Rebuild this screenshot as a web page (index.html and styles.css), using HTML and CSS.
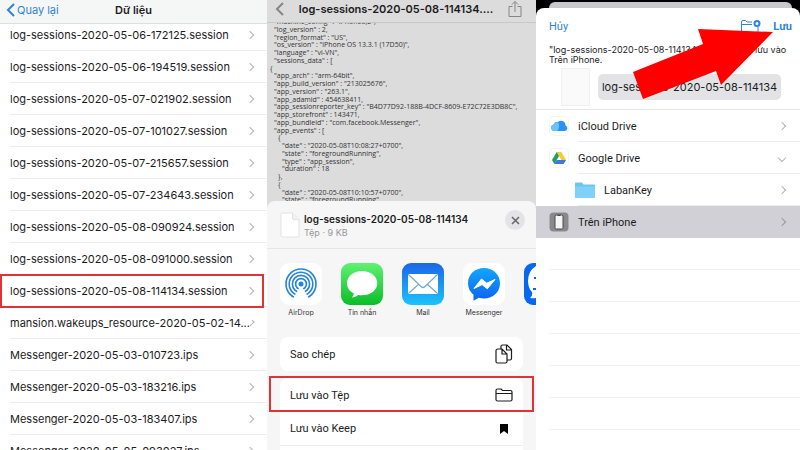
FILE: index.html
```html
<!DOCTYPE html>
<html lang="vi">
  <head>
    <meta charset="UTF-8" />
    <meta name="viewport" content="width=device-width, initial-scale=1.0" />
    <title>Dữ liệu</title>
    <link rel="stylesheet" href="styles.css" />
  </head>
  <body>
    <main class="screens">
      <!-- Dữ liệu -->
      <section class="screen">
        <header class="nav-bar">
          <button class="back" type="button">
            <svg width="9" height="14" viewBox="0 0 9 14" fill="none" stroke="currentColor" stroke-width="2"><path d="M8 1 2 7l6 6" /></svg>
            Quay lại
          </button>
          <h1>Dữ liệu</h1>
        </header>
        <ul class="log-list">
          <li><a href="#"><span>log-sessions-2020-05-06-172125.session</span></a></li>
          <li><a href="#"><span>log-sessions-2020-05-06-194519.session</span></a></li>
          <li><a href="#"><span>log-sessions-2020-05-07-021902.session</span></a></li>
          <li><a href="#"><span>log-sessions-2020-05-07-101027.session</span></a></li>
          <li><a href="#"><span>log-sessions-2020-05-07-215657.session</span></a></li>
          <li><a href="#"><span>log-sessions-2020-05-07-234643.session</span></a></li>
          <li><a href="#"><span>log-sessions-2020-05-08-090924.session</span></a></li>
          <li><a href="#"><span>log-sessions-2020-05-08-091000.session</span></a></li>
          <li class="marked"><a href="#"><span>log-sessions-2020-05-08-114134.session</span></a></li>
          <li><a href="#"><span>mansion.wakeups_resource-2020-05-02-14...</span></a></li>
          <li><a href="#"><span>Messenger-2020-05-03-010723.ips</span></a></li>
          <li><a href="#"><span>Messenger-2020-05-03-183216.ips</span></a></li>
          <li><a href="#"><span>Messenger-2020-05-03-183407.ips</span></a></li>
          <li><a href="#"><span>Messenger-2020-05-05-093027.ips</span></a></li>
        </ul>
      </section>

      <!-- Chia sẻ -->
      <section class="screen screen-share">
        <header class="nav-bar nav-dim">
          <button class="back" type="button" aria-label="Quay lại">
            <svg width="9" height="14" viewBox="0 0 9 14" fill="none" stroke="currentColor" stroke-width="2"><path d="M8 1 2 7l6 6" /></svg>
          </button>
          <h2>log-sessions-2020-05-08-114134....</h2>
          <button class="share" type="button" aria-label="Chia sẻ">
            <svg width="14" height="18" viewBox="0 0 14 18" fill="none" stroke="currentColor"><path d="M4.500 6.500H1v10h12v-10H9.500M7 12V1.500M4 4.500l3-3 3 3" /></svg>
          </button>
        </header>
        <div class="code">
          <span>"machine_config" : "iPhone8,2",</span>
          <span>"log_version" : 2,</span>
          <span>"region_format" : "US",</span>
          <span>"os_version" : "iPhone OS 13.3.1 (17D50)",</span>
          <span>"language" : "vi-VN",</span>
          <span>"sessions_data" : [</span>
          <span class="out">{</span>
          <span>"app_arch" : "arm-64bit",</span>
          <span>"app_build_version" : "213025676",</span>
          <span>"app_version" : "263.1",</span>
          <span>"app_adamid" : 454638411,</span>
          <span>"app_sessionreporter_key" : "B4D77D92-188B-4DCF-8609-E72C72E3DB8C",</span>
          <span>"app_storefront" : 143471,</span>
          <span>"app_bundleid" : "com.facebook.Messenger",</span>
          <span>"app_events" : [</span>
          <span class="in">{</span>
          <span class="deep">"date" : "2020-05-08T10:08:27+0700",</span>
          <span class="deep">"state" : "foregroundRunning",</span>
          <span class="deep">"type" : "app_session",</span>
          <span class="deep">"duration" : 18</span>
          <span class="in">},</span>
          <span class="in">{</span>
          <span class="deep">"date" : "2020-05-08T10:10:57+0700",</span>
          <span class="deep">"state" : "foregroundRunning",</span>
        </div>

        <div class="sheet">
          <div class="file-head">
            <svg width="20" height="26" viewBox="0 0 20 26" fill="#fff" stroke="#e2e2e2"><path d="M2.500 1h10L19 7.500V23a2 2 0 0 1-2 2H3a2 2 0 0 1-2-2V2.500A1.500 1.500 0 0 1 2.500 1Z" /><path d="M12.500 1v5a1.500 1.500 0 0 0 1.500 1.500h5" fill="#f1f1f1" /></svg>
            <div class="file-info">
              <h3>log-sessions-2020-05-08-114134</h3>
              <p>Tệp · 9 KB</p>
            </div>
            <button class="close" type="button" aria-label="Đóng">
              <svg width="9" height="9" viewBox="0 0 9 9" stroke="currentColor" stroke-width="1.500"><path d="m1 1 7 7M8 1 1 8" /></svg>
            </button>
          </div>
          <div class="apps">
            <button class="app" type="button">
              <svg viewBox="0 0 42 42">
                <rect width="42" height="42" rx="9" fill="#fff" />
                <g fill="none" stroke="#2583d8" stroke-width="1.600">
                  <circle cx="21" cy="21" r="15" /><circle cx="21" cy="21" r="11.800" /><circle cx="21" cy="21" r="8.600" /><circle cx="21" cy="21" r="5.400" />
                </g>
                <path d="m21 22-10 17h20Z" fill="#fff" />
                <circle cx="21" cy="21" r="2.500" fill="#2583d8" />
              </svg>
              AirDrop
            </button>
            <button class="app" type="button">
              <svg viewBox="0 0 42 42">
                <defs><linearGradient id="green" x2="0" y2="1"><stop stop-color="#5ff271" /><stop offset="1" stop-color="#0bbd29" /></linearGradient></defs>
                <rect width="42" height="42" rx="9" fill="url(#green)" />
                <path d="M21 8C12.500 8 6 13.300 6 20.200c0 4.300 2.500 8 6.800 10.200-.2 1.800-1 3-2 4 2.600-.1 4.800-1 6.200-2.500 1.300.3 2.600.4 4 .4 8.500 0 15.300-5.200 15.300-12.100S29.500 8 21 8Z" fill="#fff" />
              </svg>
              Tin nhắn
            </button>
            <button class="app" type="button">
              <svg viewBox="0 0 42 42">
                <defs><linearGradient id="blue" x2="0" y2="1"><stop stop-color="#1b66e8" /><stop offset="1" stop-color="#1cc3fb" /></linearGradient></defs>
                <rect width="42" height="42" rx="9" fill="url(#blue)" />
                <rect x="6" y="11" width="30" height="20" rx="2" fill="#fff" />
                <path d="m7 12 12 11.500q2 2 4 0L35 12M7 30l10-9M35 30l-10-9" fill="none" stroke="#75a9dc" stroke-width="1.200" />
              </svg>
              Mail
            </button>
            <button class="app" type="button">
              <svg viewBox="0 0 42 42">
                <defs><linearGradient id="msg" x2="0" y2="1"><stop stop-color="#12a7ff" /><stop offset="1" stop-color="#0c62ef" /></linearGradient></defs>
                <rect width="42" height="42" rx="9" fill="#fff" />
                <path d="M21 5C11.800 5 5 11.500 5 20.300c0 4.600 1.900 8.600 5.500 11.400v6l5.200-3a19 19 0 0 0 5.300.8c9.200 0 16-6.500 16-15.200S30.200 5 21 5Z" fill="url(#msg)" />
                <path d="m11 25.500 7.500-9.500 5.200 4.200 8.300-3.700-7.700 9.300-5.200-4.200Z" fill="#fff" stroke="#fff" stroke-linejoin="round" />
              </svg>
              Messenger
            </button>
            <button class="app" type="button" aria-label="Zalo">
              <svg viewBox="0 0 42 42">
                <rect width="42" height="42" rx="9" fill="#0868ed" />
                <path d="M14 2Q4 7 4 18q0 7 4 11 1 4-2 6 5 1 8-1 8 4 20 2V2Z" fill="#fff" />
                <path d="M10 14h5v2h-5zM9 25h6v2H9z" fill="#0868ed" />
              </svg>
            </button>
          </div>
          <div class="actions">
            <button type="button">
              Sao chép
              <svg width="18" height="20" viewBox="0 0 18 20" fill="none" stroke="currentColor" stroke-width="1.200"><path d="M6 5V2.500Q6 1 7.500 1H12l4.500 4.500v9Q16.500 16 15 16h-3M11.500 1v5h5" /><path d="M3 5h4l5 5v7.500q0 1.500-1.500 1.500h-8Q1 19 1 17.500v-11Q1 5 3 5ZM7 5v5h5" /></svg>
            </button>
          </div>
          <div class="actions">
            <button class="marked" type="button">
              Lưu vào Tệp
              <svg width="18" height="14" viewBox="0 0 18 14" fill="none" stroke="currentColor" stroke-width="1.200"><path d="M1 11.500v-9Q1 1 2.500 1H6l1.500 1.500h8Q17 2.500 17 4v7.500q0 1.500-1.500 1.500h-13Q1 13 1 11.500ZM1 5.500h16" /></svg>
            </button>
            <button type="button">
              Lưu vào Keep
              <svg width="18" height="10" viewBox="0 0 18 10" fill="#000"><path d="M5 0h8v10L9 7l-4 3Z" /></svg>
            </button>
            <button type="button" aria-label="Thêm"></button>
          </div>
        </div>
      </section>

      <!-- Lưu vào Tệp -->
      <section class="screen screen-save">
        <div class="card-behind"></div>
        <div class="save-sheet">
          <header class="save-bar">
            <button type="button">Hủy</button>
            <button class="new-folder" type="button" aria-label="Thư mục mới">
              <svg width="22" height="16" viewBox="0 0 22 16" fill="none" stroke="currentColor"><path d="M12 3H7L5.500 1.500H3Q1.500 1.500 1.500 3v11H18V8M1.500 5.500H12" /><circle cx="17" cy="4.500" r="2.500" stroke-width="2" /></svg>
            </button>
            <button class="save" type="button">Lưu</button>
          </header>
          <p class="note">"log-sessions-2020-05-08-114134.log" sẽ được lưu vào Trên iPhone.</p>
          <div class="name-row">
            <div class="thumb"></div>
            <input class="file-name" type="text" aria-label="Tên tệp" value="log-sessions-2020-05-08-114134" />
          </div>
          <ul class="places">
            <li>
              <a href="#">
                <svg width="20" height="20" viewBox="0 0 20 20"><rect x=".5" y=".5" width="19" height="19" rx="4" fill="#fff" stroke="#f4f4f4" /><path d="M5.500 15a3.300 3.300 0 0 1-.8-6.500 3 3 0 0 1 3.800-2.300 4.600 4.600 0 0 1 8 3.200A2.900 2.900 0 0 1 15.800 15Z" fill="#2b92f2" /><path d="M5.500 15a3.300 3.300 0 0 1-.8-6.500 3 3 0 0 1 4.300-2q2.500 3-.5 8.500Z" fill="#6cc3fa" /></svg>
                <span>iCloud Drive</span>
              </a>
            </li>
            <li>
              <a class="open" href="#">
                <svg width="20" height="20" viewBox="0 0 20 20"><rect x=".5" y=".5" width="19" height="19" rx="4" fill="#fff" stroke="#f4f4f4" /><path d="M7.700 4h4.600l4.700 8h-4.600Z" fill="#f9cb2e" /><path d="M7.700 4 3 12l2.300 4L10 8Z" fill="#1fa15d" /><path d="M7.600 12H17l-2.300 4H5.300Z" fill="#3a78e8" /></svg>
                <span>Google Drive</span>
              </a>
            </li>
            <li class="nested">
              <a href="#">
                <svg width="20" height="16" viewBox="0 0 20 16"><path d="M0 1.500Q0 .5 1 .5h6l1.500 2H19q1 0 1 1V15q0 1-1 1H1q-1 0-1-1Z" fill="#6cc5ee" /><path d="M0 4.500h20V15q0 1-1 1H1q-1 0-1-1Z" fill="#7fd1f7" /></svg>
                <span>LabanKey</span>
              </a>
            </li>
            <li class="selected">
              <a href="#">
                <svg width="20" height="20" viewBox="0 0 20 20"><rect x=".5" y=".5" width="19" height="19" rx="4" fill="#89898d" /><rect x="6" y="3" width="8" height="14" rx="1.500" fill="#f5f5f5" stroke="#48484b" /><path d="M8.500 3.500h3" stroke="#48484b" /></svg>
                <span>Trên iPhone</span>
              </a>
            </li>
          </ul>
          <div class="blank-rows">
            <div></div>
            <div></div>
            <div></div>
            <div></div>
            <div></div>
            <div></div>
          </div>
        </div>
        <svg class="arrow" width="140" height="70" viewBox="0 0 140 70" fill="#fe0000"><path d="m65 0 75 3-52 53-5-14-73 28L0 43l70-28Z" /></svg>
      </section>
    </main>
  </body>
</html>
```
FILE: styles.css
```css
*,
*::before,
*::after {
  box-sizing: border-box;
}

body {
  margin: 0;
  font-family: Roboto, "Liberation Sans", sans-serif;
  font-size: 11px;
  color: #1c1c1e;
}

h1,
h2,
h3,
p,
ul {
  margin: 0;
  padding: 0;
}

ul {
  list-style: none;
}

a {
  color: inherit;
  text-decoration: none;
}

button {
  padding: 0;
  border: 0;
  background: none;
  color: inherit;
  font: inherit;
  cursor: pointer;
}

svg {
  display: block;
  flex: none;
}

.nav-bar,
.log-list,
.file-head,
.app,
.note,
.file-name {
  font-family: Inter, "Liberation Sans", sans-serif;
}

.screens {
  display: grid;
  grid-template-columns: 267fr 269fr 264fr;
  height: 100vh;
  overflow: hidden;
}

.screen {
  position: relative;
  min-width: 0;
  overflow: hidden;
  background-color: #fff;
}

/* nav bars */
.nav-bar {
  position: relative;
  z-index: 1;
  display: grid;
  grid-template-columns: 1fr auto 1fr;
  align-items: center;
  height: 24px;
  padding: 0 6px 4px;
  background-color: #f5f6f6;
  border-bottom: 1px solid #dedede;
}

.nav-bar h1,
.nav-bar h2 {
  font-size: 11px;
  font-weight: 600;
}

.back {
  display: flex;
  align-items: center;
  gap: 2px;
  color: #2c85d8;
}

.nav-dim {
  grid-template-columns: auto 1fr auto;
  padding: 0 14px 4px 8px;
  background-color: #dcdcdc;
  border-color: #c8c8c8;
  text-align: center;
}

.nav-dim .back,
.nav-dim .share {
  color: #868686;
}

/* log list */
.log-list {
  margin-top: -5px;
}

.log-list li {
  height: 32px;
  padding-left: 10px;
}

.log-list a {
  display: flex;
  align-items: center;
  justify-content: space-between;
  height: 100%;
  padding-right: 14px;
  border-bottom: 1px solid #ececec;
}

.log-list a::after,
.places a::after {
  content: "";
  width: 6px;
  height: 6px;
  border: solid #b4b4b8;
  border-width: 1px 1px 0 0;
  transform: rotate(45deg);
}

.log-list span {
  white-space: nowrap;
}

.marked {
  position: relative;
}

.marked::before {
  content: "";
  position: absolute;
  inset: -1px 3px -1px 0;
  border: 2px solid #e23236;
}

/* share screen */
.screen-share {
  display: flex;
  flex-direction: column;
  background-color: #dcdcdc;
}

.code {
  display: grid;
  grid-auto-rows: 1fr;
  flex: none;
  height: 186px;
  margin-top: -5px;
  padding-left: 7px;
  font-family: "Open Sans", "Liberation Sans", sans-serif;
  font-size: 7px;
  line-height: 7px;
  color: #333;
  white-space: nowrap;
}

.code .out {
  margin-left: -4px;
}

.code .in {
  margin-left: 4px;
}

.code .deep {
  margin-left: 8px;
}

.sheet {
  position: relative;
  flex: 1;
  margin-top: -3px;
  border-radius: 8px 8px 0 0;
  background-color: #f6f6f6;
}

.file-head {
  display: flex;
  gap: 4px;
  height: 48px;
  padding: 11px 11px 0 13px;
  border-bottom: 1px solid #e6e6e6;
}

.file-info {
  flex: 1;
}

.file-head h3 {
  font-size: 10px;
  font-weight: 600;
  line-height: 14px;
}

.file-head p {
  font-size: 9px;
  line-height: 14px;
  color: #96969a;
}

.close {
  display: grid;
  place-items: center;
  width: 20px;
  height: 20px;
  margin-top: -2px;
  border-radius: 50%;
  background-color: #e4e4e7;
  color: #66666a;
}

.apps {
  display: flex;
  gap: 19px;
  height: 88px;
  padding: 14px 0 0 13px;
  overflow: hidden;
}

.app {
  display: flex;
  flex: none;
  flex-direction: column;
  align-items: center;
  gap: 3px;
  width: 42px;
  font-size: 7px;
  line-height: 10px;
  color: #333;
}

.app svg {
  width: 42px;
  height: 42px;
}

.actions {
  margin: 0 13px 7px;
  border-radius: 8px;
  background-color: #fff;
}

.actions button {
  display: flex;
  align-items: center;
  justify-content: space-between;
  width: 100%;
  height: 34px;
  padding: 0 10px;
}

.actions button + button {
  border-bottom: 1px solid #ececec;
}

.actions .marked::before {
  inset: -2px -11px 0;
}

/* save screen */
.screen-save {
  display: flex;
  flex-direction: column;
  background-color: #000;
}

.card-behind {
  flex: none;
  height: 6px;
  margin: 2px 8px 0 13px;
  border-radius: 6px 6px 0 0;
  background-color: #c9c9cb;
}

.save-sheet {
  flex: 1;
  border-radius: 8px 8px 0 0;
  background-color: #fff;
}

.save-bar {
  display: flex;
  align-items: center;
  height: 37px;
  padding: 0 8px 0 13px;
  color: #2c85d8;
}

.new-folder {
  margin-left: auto;
}

.save {
  margin-left: 11px;
  font-weight: 700;
}

.note {
  padding: 0 8px 0 13px;
  font-size: 9px;
  line-height: 10px;
}

.name-row {
  display: flex;
  align-items: center;
  gap: 8px;
  height: 45px;
  padding: 0 19px 0 25px;
  border-bottom: 1px solid #e6e6e6;
}

.thumb {
  flex: none;
  width: 29px;
  height: 38px;
  border: 1px solid #f0f0f0;
  background-color: #fafafa;
}

.file-name {
  flex: 1;
  min-width: 0;
  height: 26px;
  padding: 0 3px;
  border: 0;
  border-radius: 5px;
  background-color: #e3e3e6;
  color: inherit;
  font-size: 11px;
  text-align: center;
}

.places li {
  height: 32px;
  padding-left: 13px;
}

.places a {
  display: flex;
  align-items: center;
  gap: 9px;
  height: 100%;
  padding-right: 15px;
}

.places span {
  flex: 1;
}

.places li:not(.selected) {
  background: linear-gradient(#ececec, #ececec) 42px 100% / 100% 1px no-repeat;
}

.places .nested {
  padding-left: 39px;
}

.places .open::after {
  transform: rotate(135deg);
}

.places .selected {
  background-color: #d1d0d6;
}

.places .selected a::after {
  border-color: #98989c;
}

.blank-rows div {
  height: 32px;
  margin-left: 13px;
  border-bottom: 1px solid #f0f0f0;
}

.arrow {
  position: absolute;
  top: 29px;
  right: 27px;
}
```
